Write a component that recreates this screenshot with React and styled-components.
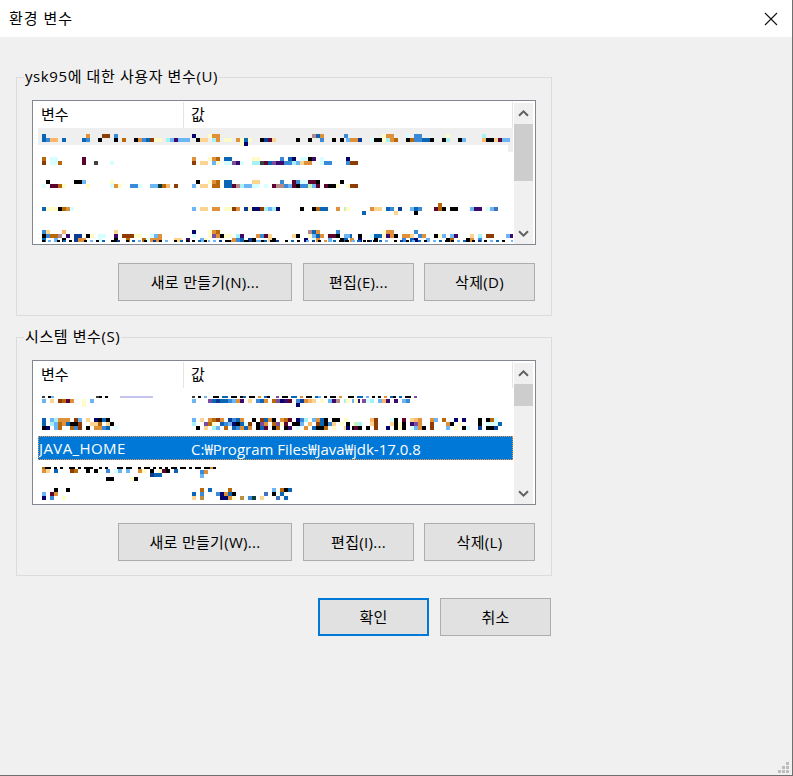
import React from "react";
import styled, { createGlobalStyle } from "styled-components";

const GlobalStyle = createGlobalStyle`
  html, body {
    margin: 0;
    padding: 0;
    background: #f0f0f0;
  }
  * {
    box-sizing: border-box;
  }
`;

const Window = styled.div`
  position: relative;
  width: 793px;
  height: 776px;
  background: #f0f0f0;
  border-right: 1px solid #6f6f6f;
  border-bottom: 1px solid #6f6f6f;
  font-family: "Open Sans", "Noto Sans CJK KR", sans-serif;
  font-size: 15px;
  color: #000;
  overflow: hidden;
`;

const TitleBar = styled.div`
  height: 37px;
  background: #fff;
  display: flex;
  align-items: center;
  justify-content: space-between;
  padding: 0 14px 0 9px;
`;

const Title = styled.span`
  font-size: 15px;
  letter-spacing: 1px;
  margin-bottom: 2px;
`;

const Content = styled.div`
  padding: 30px 0 0 16px;
  display: flex;
  flex-direction: column;
`;

const Group = styled.fieldset`
  width: 536px;
  margin: 0 0 ${(p) => p.$after || 0}px;
  padding: 13px 15px 14px;
  border: 1px solid #dcdcdc;
  min-width: 0;
`;

const Legend = styled.legend`
  height: 20px;
  line-height: 18px;
  margin-left: -8px;
  padding: 0 1px;
  font-size: 15px;
  letter-spacing: 0.6px;
  white-space: nowrap;
`;

const ListBox = styled.div`
  width: 504px;
  height: 145px;
  border: 1px solid #828790;
  background: #fff;
  display: flex;
  padding: 1px 2px 0 0;
  overflow: hidden;
`;

const Table = styled.div`
  width: 481px;
  overflow: hidden;
`;

const Header = styled.div`
  height: 26px;
  display: flex;
  align-items: center;
  margin-left: 5px;
  width: 475px;
  border-right: 1px solid #e5e5e5;
  font-size: 15px;
`;

const HeaderCell = styled.div`
  width: ${(p) => p.$width}px;
  height: 100%;
  padding-left: ${(p) => p.$pad}px;
  line-height: 24px;
  border-right: ${(p) => (p.$line ? "1px solid #e5e5e5" : "none")};
`;

const Row = styled.div`
  height: 24px;
  width: 475px;
  margin-left: 5px;
  display: flex;
  align-items: center;
  overflow: hidden;
  ${(p) =>
    p.$hot &&
    `background:
      linear-gradient(#efefef, #efefef) 0 0 / 100% 17px no-repeat,
      linear-gradient(#efefef, #efefef) right top / 5px 24px no-repeat;`}
`;

const SelectedRow = styled(Row)`
  background: #0078d7;
  color: #fff;
  border: 1px dotted #f09a4a;
  font-size: 15px;
`;

const NameCell = styled.span`
  width: 152px;
  padding-left: 0;
  letter-spacing: 0.4px;
`;

const ValueCell = styled.span`
  white-space: nowrap;
`;

const Scrollbar = styled.div`
  width: 19px;
  height: 141px;
  margin-top: 1px;
  background: #f0f0f0;
  display: flex;
  flex-direction: column;
`;

const ScrollButton = styled.div`
  height: 21px;
  display: flex;
  align-items: center;
  justify-content: center;
  color: #606060;
`;

const Thumb = styled.div`
  height: ${(p) => p.$height}px;
  background: #cdcdcd;
`;

const Track = styled.div`
  flex: 1;
`;

const Actions = styled.div`
  display: flex;
  gap: 10px;
  margin-top: 18px;
  padding-left: 86px;
`;

const Button = styled.div`
  width: ${(p) => p.$width || 111}px;
  margin-right: ${(p) => p.$spacer || 0}px;
  height: 38px;
  padding-bottom: 2px;
  background: #e1e1e1;
  border: ${(p) => (p.$primary ? "2px solid #0078d7" : "1px solid #adadad")};
  display: flex;
  align-items: center;
  justify-content: center;
  font-size: 15px;
  letter-spacing: 0.3px;
  white-space: nowrap;
`;

const Footer = styled.div`
  width: 535px;
  display: flex;
  justify-content: flex-end;
  gap: 11px;
`;

const Grip = styled.svg`
  position: absolute;
  right: 3px;
  bottom: 2px;
`;

const palette = {
  b: "#0a66b4",
  m: "#3a8ad8",
  l: "#6cb6f6",
  c: "#d8ffff",
  a: "#a4f2f6",
  n: "#04046c",
  x: "#0a3c96",
  k: "#000000",
  o: "#e09038",
  e: "#fcb868",
  t: "#fcd490",
  r: "#8c3c04",
  d: "#b86808",
  y: "#fffcc8",
  p: "#3c0a6c",
  w: "#5c0430",
  s: "#b48a8a",
  g: "#404040",
  z: "#0c3c3c",
  f: "#c8f4b8",
  v: "#7c4ca0",
  h: "#b89040",
  V: "#4470c0",
  i: "#c4c4f0",
};

const Mosaic = ({ parts }) => (
  <svg width="475" height="24" shapeRendering="crispEdges">
    {parts.map((part, i) =>
      part.rows.map((line, r) =>
        line.split("").map((ch, c) =>
          palette[ch] ? (
            <rect
              key={`${i}-${r}-${c}`}
              x={part.x - 38 + c * (part.w || 4)}
              y={part.y + r * (part.h || 4)}
              width={part.w || 4}
              height={part.h || 4}
              fill={palette[ch]}
            />
          ) : null
        )
      )
    )}
  </svg>
);

const userRows = [
  [
    {
      x: 42,
      y: 6,
      rows: ["b..........o...rr.m", "bmee.b....bm..k...k.d..kombryy.alplll"],
    },
    {
      x: 192,
      y: 6,
      rows: [
        "n...yoo.......................sbo.....m",
        ".ktt.ao.yy.oyby..kxwt.....k..k..m..k.k",
        "............yn",
      ],
    },
    {
      x: 346,
      y: 6,
      rows: [
        ".........yoo...c.mm......y........a",
        "loox..ckkyaod..kdmmbbk..ka..kl....ekktwll",
      ],
    },
  ],
  [
    {
      x: 42,
      y: 5,
      rows: ["d.cc......w", "r.ccd.....w..g...c"],
    },
    {
      x: 192,
      y: 5,
      rows: [
        "o...yod.bb.....yy.....m.bn.cckp.c",
        "r.tt.ly.ccvpc..aagwbvppmmaltoo..cmm",
      ],
    },
    {
      x: 346,
      y: 5,
      rows: ["n", "mrr"],
    },
  ],
  [
    {
      x: 42,
      y: 4,
      rows: [".k......kkl......y", "c.wwdy.....y.....coy..mmc..llzde.r"],
    },
    {
      x: 192,
      y: 4,
      rows: [
        ".k..yod.bb.....tt.....m..wmccwwk.....k",
        "l.tt.dd.bbwsallcc.c.wssmlwkmmflw.wkky",
      ],
    },
    {
      x: 346,
      y: 8,
      rows: ["yrr"],
    },
  ],
  [
    {
      x: 42,
      y: 7,
      rows: ["byyykdoc"],
    },
    {
      x: 192,
      y: 7,
      rows: ["l.tt.oo.yyro.xynnralan.....k..kdbb..o.f"],
    },
    {
      x: 346,
      y: 3,
      rows: [
        ".......................d",
        "y.....ott.bm.x..lbm...wdk.kk...lpp.clV",
        "....b.......t....k",
      ],
    },
  ],
  [
    {
      x: 42,
      y: 6,
      rows: [
        "mt...e............t",
        "kmdds.p.xx.ky.cc..p.rrryy..clo",
        "b..l.k..xoo...c...k..d...dcooo...tt.p",
      ],
    },
    {
      x: 42,
      y: 16,
      w: 3,
      h: 2,
      rows: ["k.l..k.b.k.x..k.l.k.b..k.x..k.b.l.k..x.k.l..k.b.k.x..k.l.k.b..k.x..k.b.l.k..x"],
    },
    {
      x: 192,
      y: 6,
      rows: [
        "n...yod......................sbo....m",
        "c...yvokyy.ap...omwt.....tk..ylbo.wwk.lb",
        "..ly......omb.xk...tk.......n.co..l..kb.",
      ],
    },
    {
      x: 192,
      y: 16,
      w: 3,
      h: 2,
      rows: ["k.b.k..l.x.k.o..b.k.k.l.b.k.x..k.b.k..l.x.k.o..b.k.k.l.b.k.x"],
    },
    {
      x: 346,
      y: 6,
      rows: [
        ".........yoo.....m",
        "l..k..cbbypok.oot.mo..kyl.lp...t.a.rr...lp",
        ".o.n...k......m.bn..l....kd...ko.m",
      ],
    },
    {
      x: 346,
      y: 16,
      w: 3,
      h: 2,
      rows: ["k.l.b..k.k.b.l..k.x.k.l.b.k..l.b.k.k.l.b..k.x.k.l.b.k..l.b.k.k.l.b"],
    },
  ],
];

const systemRows = [
  [
    {
      x: 42,
      y: 8,
      w: 3,
      h: 2,
      rows: ["g.kl..............gk.k....iiiiiiiiiii"],
    },
    {
      x: 42,
      y: 11,
      rows: ["l.t.rdwo..y.l", "..........y"],
    },
    {
      x: 192,
      y: 8,
      w: 3,
      h: 2,
      rows: ["g.k.l..kk.bb.kk.kb.kk.o.bk..v.kk.bb.o.kk.bl.k.kk.o..kk.bb.l.k.k.o.bk.b.kk.v"],
    },
    {
      x: 192,
      y: 11,
      rows: [
        "l...vbxbbmlop.t.mbo.dvnpw.mxoet.y.lps.a.lp.a.",
        "..........................n",
      ],
    },
    {
      x: 346,
      y: 11,
      rows: ["y.y.vca.lep.p.lm"],
    },
  ],
  [
    {
      x: 42,
      y: 6,
      rows: ["b.laooo.rl.t.nkbk", "b.aldobkkr..ttd.tk", "kn.ld..dmr.k.oomb.c"],
    },
    {
      x: 192,
      y: 6,
      rows: [
        "l.t.odro.xmbo..k.rbok.odw.nma.lobk.kk.y",
        "a..vdy.bmlnkbcr.kvo.dvyw.kkl.e.rbkmt.y.",
        ".k.t.al.d.bmobo.kbw.kd.kp.c.o.bkkd.y..t.k",
      ],
    },
    {
      x: 346,
      y: 6,
      rows: [
        "......er...ck.w.teo..ol.d..n.n...k.kdc",
        "k.fa..tr...tkyk.pvo..r...ok.y....k.cccb",
        "n.wk.k.r..n.kyk.clok.r...l.y.kc..x.kkx",
      ],
    },
  ],
  null,
  [
    {
      x: 42,
      y: 7,
      w: 3,
      h: 2,
      rows: ["dkk.k.k..kk.k.kkk..k.k...kk.kk..k.kk.k.k.k.kk.kk.k.kk.k.kk"],
    },
    {
      x: 42,
      y: 9,
      rows: [
        "ot.b...rd..k.k..m.cl.l..oy.k.ywk.b",
        "...........................xbb",
        "................kk....yk",
      ],
    },
    {
      x: 192,
      y: 7,
      w: 3,
      h: 2,
      rows: ["..k..ko"],
    },
    {
      x: 192,
      y: 10,
      rows: ["..mo", "..l"],
    },
  ],
  [
    {
      x: 42,
      y: 4,
      rows: ["...k..k", "l.wo", "n.m..y"],
    },
    {
      x: 192,
      y: 4,
      rows: [
        "..d.b....d..........l.dkb",
        "b.m...mnobk.......V.k.b",
        "t.h....nnoy.h.mz.t...V.b",
      ],
    },
  ],
];

const Chevron = ({ up }) => (
  <svg width="11" height="7" viewBox="0 0 11 7" fill="none">
    <path
      d={up ? "M1 5.8 5.5 1.4 10 5.8" : "M1 1.2 5.5 5.6 10 1.2"}
      stroke="currentColor"
      strokeWidth="2"
    />
  </svg>
);

const VariableList = ({ rows, thumbHeight, selected }) => (
  <ListBox>
    <Table>
      <Header>
        <HeaderCell $width={146} $pad={3} $line>
          변수
        </HeaderCell>
        <HeaderCell $width={200} $pad={7}>
          값
        </HeaderCell>
      </Header>
      {rows.map((parts, i) =>
        parts ? (
          <Row key={i} $hot={selected === undefined && i === 0}>
            <Mosaic parts={parts} />
          </Row>
        ) : (
          <SelectedRow key={i}>
            <NameCell>JAVA_HOME</NameCell>
            <ValueCell>C:₩Program Files₩Java₩jdk-17.0.8</ValueCell>
          </SelectedRow>
        )
      )}
    </Table>
    <Scrollbar>
      <ScrollButton>
        <Chevron up />
      </ScrollButton>
      <Thumb $height={thumbHeight} />
      <Track />
      <ScrollButton>
        <Chevron />
      </ScrollButton>
    </Scrollbar>
  </ListBox>
);

export default function App() {
  return (
    <>
      <GlobalStyle />
      <Window>
        <TitleBar>
          <Title>환경 변수</Title>
          <svg width="14" height="14" viewBox="0 0 14 14" fill="none">
            <path d="M1 1 13 13M13 1 1 13" stroke="#111" strokeWidth="1.1" />
          </svg>
        </TitleBar>
        <Content>
          <Group $after={11}>
            <Legend>ysk95에 대한 사용자 변수(U)</Legend>
            <VariableList rows={userRows} thumbHeight={57} />
            <Actions>
              <Button $width={174} $spacer={1}>
                새로 만들기(N)...
              </Button>
              <Button>편집(E)...</Button>
              <Button>삭제(D)</Button>
            </Actions>
          </Group>
          <Group $after={22}>
            <Legend>시스템 변수(S)</Legend>
            <VariableList rows={systemRows} thumbHeight={22} selected={2} />
            <Actions>
              <Button $width={174} $spacer={1}>
                새로 만들기(W)...
              </Button>
              <Button>편집(I)...</Button>
              <Button>삭제(L)</Button>
            </Actions>
          </Group>
          <Footer>
            <Button $primary>확인</Button>
            <Button>취소</Button>
          </Footer>
        </Content>
        <Grip width="11" height="11" viewBox="0 0 11 11" fill="#bcbcbc">
          <rect x="8" y="0" width="3" height="3" />
          <rect x="4" y="4" width="3" height="3" />
          <rect x="8" y="4" width="3" height="3" />
          <rect x="0" y="8" width="3" height="3" />
          <rect x="4" y="8" width="3" height="3" />
          <rect x="8" y="8" width="3" height="3" />
        </Grip>
      </Window>
    </>
  );
}
